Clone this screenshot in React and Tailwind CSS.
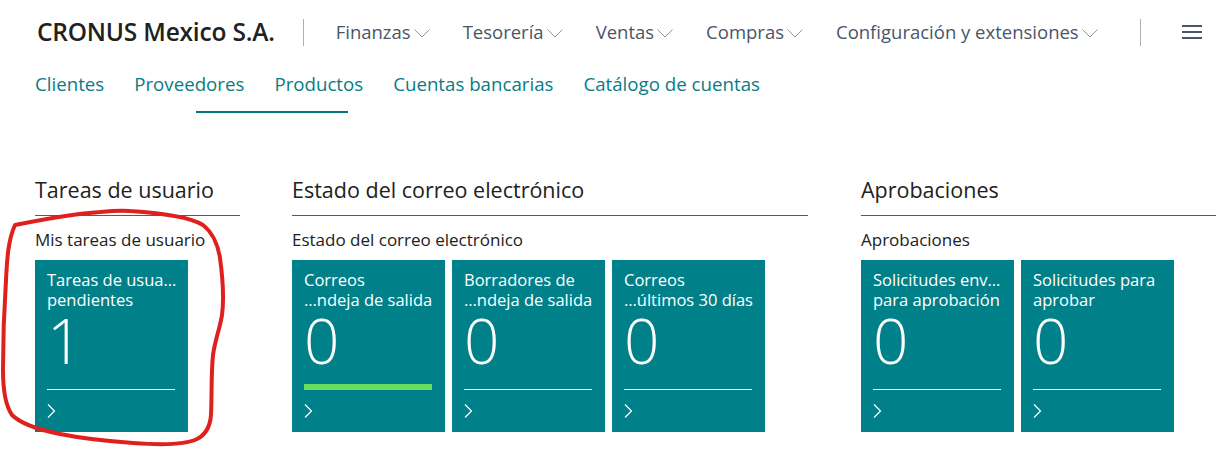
import React from "react";

const font = { fontFamily: '"Open Sans", "Noto Sans", sans-serif' };

function Chevron() {
  return (
    <svg width="16" height="9" viewBox="0 0 16 9" className="ml-[3px] mt-[3px]">
      <polyline points="0.5,0.5 8,8 15.5,0.5" fill="none" stroke="#8a939e" strokeWidth="1" />
    </svg>
  );
}

function TileArrow() {
  return (
    <svg width="9" height="14" viewBox="0 0 9 14">
      <polyline points="1,0.5 7.5,7 1,13.5" fill="none" stroke="#ffffff" strokeWidth="1.2" />
    </svg>
  );
}

function Tile({ l1, l2, value, green }) {
  return (
    <div className="w-[153px] h-[172px] bg-[#00818a] text-white flex flex-col px-[12px] pt-[10px]">
      <div className="text-[16.5px] leading-[20px] whitespace-nowrap">{l1}</div>
      <div className="text-[16.5px] leading-[20px] whitespace-nowrap">{l2}</div>
      <div className="text-[62px] leading-[60px] font-light">{value}</div>
      <div className="h-[20px] flex items-end pr-[1px]">
        {green ? (
          <div className="w-full h-[6px] bg-[#6ade5c]" />
        ) : (
          <div className="w-full h-[1px] bg-white" />
        )}
      </div>
      <div className="flex-1 flex items-center">
        <TileArrow />
      </div>
    </div>
  );
}

function Section({ width, title, sub, children }) {
  return (
    <div className={width}>
      <div className="text-[21.5px] leading-[28px] font-medium text-[#212121] pb-[11px] border-b border-[#505c68] whitespace-nowrap">
        {title}
      </div>
      <div className="mt-[12px] text-[17px] leading-[24px] font-medium text-[#212121] whitespace-nowrap">{sub}</div>
      <div className="mt-[8px] flex gap-[7px]">{children}</div>
    </div>
  );
}

export default function App() {
  const menu = ["Finanzas", "Tesorería", "Ventas", "Compras", "Configuración y extensiones"];
  const nav = ["Clientes", "Proveedores", "Productos", "Cuentas bancarias", "Catálogo de cuentas"];
  return (
    <div className="relative w-[1223px] h-[462px] bg-white overflow-hidden" style={font}>
      {/* Header */}
      <div className="h-[64px] flex items-center pl-[37px]">
        <div className="text-[24.5px] font-semibold text-[#212121] tracking-[-0.2px] whitespace-nowrap">CRONUS Mexico S.A.</div>
        <div className="w-[1px] h-[27px] bg-[#a8afb8] ml-[28px] mr-[32px]" />
        <div className="flex items-center gap-[33px]">
          {menu.map((m) => (
            <div key={m} className="flex items-center text-[18.5px] text-[#4a5568] whitespace-nowrap">
              <span>{m}</span>
              <Chevron />
            </div>
          ))}
        </div>
        <div className="w-[1px] h-[27px] bg-[#a8afb8] ml-[42px]" />
        <div className="ml-[41px] flex flex-col gap-[4.5px]">
          <div className="w-[20px] h-[1.5px] bg-[#4a5568]" />
          <div className="w-[20px] h-[1.5px] bg-[#4a5568]" />
          <div className="w-[20px] h-[1.5px] bg-[#4a5568]" />
        </div>
      </div>
      {/* Nav */}
      <div className="h-[47px] flex items-start pt-[6px] pl-[35px] gap-[30px] text-[18.7px] leading-[28px] text-[#0a7c84]">
        {nav.map((n) => (
          <div key={n} className="whitespace-nowrap">{n}</div>
        ))}
      </div>
      <div className="ml-[196px] w-[152px] h-[2px] bg-[#00767c]" />
      {/* Main */}
      <div className="mt-[63px] flex pl-[35px]">
        <Section width="w-[205px]" title="Tareas de usuario" sub="Mis tareas de usuario">
          <Tile l1="Tareas de usua…" l2="pendientes" value="1" />
        </Section>
        <div className="w-[52px]" />
        <Section width="w-[516px]" title="Estado del correo electrónico" sub="Estado del correo electrónico">
          <Tile l1="Correos" l2="…ndeja de salida" value="0" green />
          <Tile l1="Borradores de" l2="…ndeja de salida" value="0" />
          <Tile l1="Correos" l2="…últimos 30 días" value="0" />
        </Section>
        <div className="w-[53px]" />
        <Section width="w-[355px]" title="Aprobaciones" sub="Aprobaciones">
          <Tile l1="Solicitudes env…" l2="para aprobación" value="0" />
          <Tile l1="Solicitudes para" l2="aprobar" value="0" />
        </Section>
      </div>
      {/* Red annotation */}
      <svg className="absolute left-0 top-0 pointer-events-none" width="1223" height="462">
        <path
          d="M 15 225 C 40 220, 70 214, 100 212 C 110 211, 120 210, 130 211 C 160 213, 190 217, 203 225 C 212 232, 218 245, 220 258 C 223 280, 224 300, 222 315 C 220 328, 215 340, 213 355 C 211 375, 212 395, 211 415 C 210 428, 205 435, 197 439 C 185 445, 160 445, 133 443 C 105 441, 80 438, 60 434 C 40 430, 22 425, 12 415 C 5 405, 3 390, 3 370 C 3 340, 4 310, 6 280 C 7 260, 8 240, 15 225 Z"
          fill="none"
          stroke="#e0201c"
          strokeWidth="4"
          strokeLinejoin="round"
        />
      </svg>
    </div>
  );
}
